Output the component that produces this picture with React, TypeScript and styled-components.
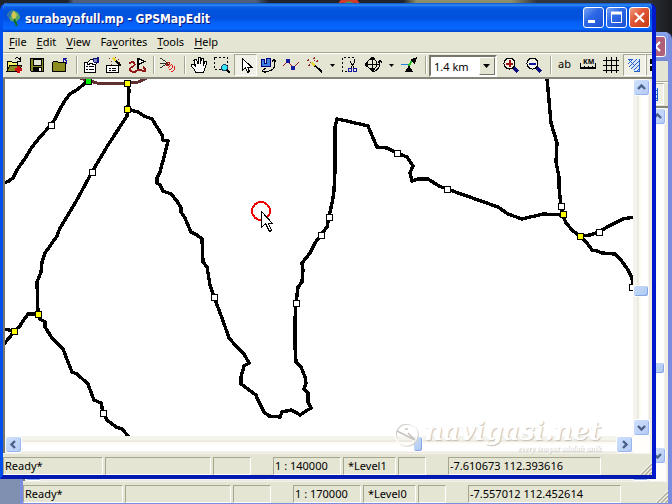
import React from "react";
import styled, { createGlobalStyle, css } from "styled-components";

const GlobalStyle = createGlobalStyle`
  * { box-sizing: border-box; }
  html, body { margin: 0; height: 100%; }
  body, button, select {
    font-family: "Noto Sans", "DejaVu Sans", sans-serif;
    font-size: 11px;
    line-height: 14px;
    color: #000;
  }
`;

const FACE = "#e5e5d3";
const SHADOW = "#a5a590";

const Desktop = styled.div`
  position: relative;
  height: 100vh;
  overflow: hidden;
  background:
    radial-gradient(circle at 349px 8px, #fff 0 3px, #4a9a50 4px 6px, #d23a2c 7px 11px, transparent 12px),
    linear-gradient(90deg, #20242c 0 10%, #50607c 11% 38%, #20242c 40% 60%, #8f8e6c 62% 76%, #30343c 80% 96%, #181a1c) 0 0 / 100% 60px no-repeat,
    #8090b0;
`;

const Frame = styled.section<{ $active: boolean }>`
  position: absolute;
  display: flex;
  flex-direction: column;
  overflow: hidden;
  background: ${FACE};
  border-style: solid;
  border-width: 0 4px 4px 3px;
  border-radius: 7px 7px 0 0;
  ${(p) =>
    p.$active
      ? css`
          inset: 3px 16px 25px 0;
          border-color: #0831d9 #0019cf #0019b0 #0050ee;
        `
      : css`
          inset: 32px 0 -3px 20px;
          border-color: #7a8ce0;
        `}
`;

const TitleBar = styled.header<{ $active: boolean }>`
  display: flex;
  align-items: center;
  flex: none;
  height: 29px;
  margin: 0 -4px 0 -3px;
  padding: 0 6px 0 5px;
  background: ${(p) =>
    p.$active
      ? "linear-gradient(#0a50c8, #2e8cf4 2px, #0a5ee8 4px, #0353dd 7px, #0250dc 15px, #0560f8 20px, #0668ff 26px, #0347d4 28px)"
      : "linear-gradient(#8aa4ec, #7e97e4 6px, #7f93de 24px, #7388d4)"};
`;

const Title = styled.h1`
  flex: 1;
  margin: 2px 0 0 4px;
  font: bold 12px/18px "DejaVu Sans Condensed", "DejaVu Sans", sans-serif;
  color: #fff;
  text-shadow: 1px 1px 0 #0a1c80;
  white-space: nowrap;
`;

const Caption = styled.div`
  display: flex;
  gap: 2px;
  margin-left: auto;
`;

const CaptionButton = styled.button<{ $close?: boolean; $dim?: boolean }>`
  width: 21px;
  height: 21px;
  padding: 0;
  border: 1px solid #fff;
  border-radius: 3px;
  background: ${(p) =>
    p.$dim
      ? "#b06078"
      : p.$close
        ? "linear-gradient(135deg, #f0a080, #e0583a 40%, #c83a14)"
        : "linear-gradient(135deg, #7aa4f4, #2f6ae6 40%, #1a50d4)"};
  svg { display: block; }
`;

const MenuBar = styled.nav`
  display: flex;
  flex: none;
  height: 20px;
  padding-left: 1px;
`;

const MenuItem = styled.button`
  padding: 0 5px;
  border: 0;
  background: none;
  line-height: 18px;
  u { text-underline-offset: 2px; }
`;

const ToolBar = styled.div`
  display: flex;
  flex: none;
  height: 27px;
  overflow: hidden;
  border-top: 1px solid ${SHADOW};
  border-bottom: 2px solid #85857a;
  padding-top: 1px;
  box-shadow: inset 0 1px 0 #fff;
`;

const Tool = styled.button<{ $on?: boolean; $end?: boolean }>`
  flex: none;
  width: 23px;
  height: 22px;
  padding: 0 2px;
  border: 1px solid transparent;
  background: none;
  margin: ${(p) => (p.$end ? "0 4px 0 auto" : 0)};
  ${(p) =>
    p.$on &&
    css`
      border-color: ${SHADOW} #fff #fff ${SHADOW};
      background: #f0f0e6;
    `}
  svg { display: block; shape-rendering: crispEdges; }
`;

const DropTool = styled.button`
  flex: none;
  width: 13px;
  height: 22px;
  padding: 0 4px;
  border: 0;
  background: none;
  svg { display: block; }
`;

const Divider = styled.span`
  flex: none;
  width: 8px;
  height: 18px;
  margin-top: 2px;
  background: linear-gradient(90deg, transparent 4px, ${SHADOW} 4px 5px, #fff 5px 6px, transparent 6px);
`;

const ScaleBox = styled.label`
  display: grid;
  grid-template-columns: 1fr 16px;
  flex: none;
  width: 68px;
  height: 22px;
  margin: 1px 3px 0 0;
  border: 2px solid;
  border-color: #77776c #fff #fff #77776c;
  background: #fff;
`;

const ScaleSelect = styled.select`
  grid-area: 1 / 1 / 2 / 3;
  appearance: none;
  min-width: 0;
  padding: 0 3px;
  border: 0;
  background: #fff;
  line-height: 17px;
`;

const ScaleArrow = styled.span`
  grid-area: 1 / 2 / 2 / 3;
  z-index: 1;
  pointer-events: none;
  border: 1px solid;
  border-color: #fff #77776c #77776c #fff;
  background: ${FACE};
  svg { display: block; }
`;

const Workspace = styled.main`
  display: grid;
  grid-template: minmax(0, 1fr) 17px / minmax(0, 1fr) 17px;
  flex: 1;
  min-height: 0;
  background: #fff;
  border-left: 2px solid #77776c;
  border-right: 2px solid #f0eee2;
`;

const MapCanvas = styled.svg`
  display: block;
  width: 100%;
  height: 100%;
  overflow: hidden;
`;

const Scroll = styled.div<{ $vertical?: boolean }>`
  display: flex;
  flex-direction: ${(p) => (p.$vertical ? "column" : "row")};
  min-width: 0;
  min-height: 0;
  background: linear-gradient(
    ${(p) => (p.$vertical ? "90deg" : "180deg")},
    #f4f4ec 4px, #ecebe3 4px 6px, #fffbf2 6px 8px, #fff 8px 15px, #ece8e0 16px
  );
`;

const ScrollButton = styled.button`
  flex: none;
  width: 17px;
  height: 17px;
  padding: 0;
  border: 1px solid #fff;
  border-radius: 3px;
  background: linear-gradient(135deg, #cfe0fc, #b4cbf4);
  box-shadow: inset -1px -1px 0 #98b4ec;
  svg { display: block; }
`;

const Thumb = styled.div<{ $vertical?: boolean }>`
  flex: none;
  width: ${(p) => (p.$vertical ? "16px" : "10px")};
  height: ${(p) => (p.$vertical ? "12px" : "16px")};
  border: 1px solid #fff;
  border-radius: 3px;
  background: linear-gradient(135deg, #c6dbf8, #adc8f2);
  box-shadow: inset -1px -1px 0 #84a4e4;
`;

const Space = styled.span<{ $grow: number }>`
  flex: ${(p) => p.$grow} 1 0;
`;

const Corner = styled.div`
  background: #fffefa;
`;

const StatusBar = styled.footer`
  display: flex;
  align-items: flex-start;
  flex: none;
  height: 22px;
  padding-top: 3px;
  border-top: 1px solid #f4f0ec;
`;

const Panel = styled.span<{ $w: number; $gap?: number; $pad?: number }>`
  flex: none;
  width: ${(p) => p.$w}px;
  height: 18px;
  margin-right: ${(p) => p.$gap ?? 2}px;
  padding-left: ${(p) => p.$pad ?? 1}px;
  border: 1px solid;
  border-color: ${SHADOW} #fff #fff ${SHADOW};
  line-height: 16px;
  white-space: nowrap;
`;

const Grip = styled.svg`
  display: block;
  flex: none;
  align-self: flex-end;
  margin-left: auto;
`;

const Watermark = styled.aside`
  position: absolute;
  right: 71px;
  bottom: 50px;
  display: grid;
  grid-template: 25px 10px / 30px auto;
  color: #fff;
  text-shadow: 1px 1px 1px #c4c0ba;
  white-space: nowrap;
  pointer-events: none;
  svg { grid-row: 1 / 3; }
`;

const WatermarkName = styled.span`
  font: italic bold 26px/24px "DejaVu Serif", serif;
`;

const WatermarkLine = styled.span`
  justify-self: end;
  font: italic bold 8px/10px "Liberation Serif", serif;
`;

type Dir = "up" | "down" | "left" | "right";
const chevrons: Record<Dir, string> = {
  up: "M4 9 L7.5 5.5 L11 9",
  down: "M4 6 L7.5 9.5 L11 6",
  left: "M9 4 L5.5 7.5 L9 11",
  right: "M6 4 L9.5 7.5 L6 11",
};

const Arrow = ({ dir }: { dir: Dir }) => (
  <ScrollButton aria-label={`Scroll ${dir}`}>
    <svg width="15" height="15">
      <path d={chevrons[dir]} fill="none" stroke="#4a6088" strokeWidth="2.4" />
    </svg>
  </ScrollButton>
);

const Triangle = () => (
  <svg width="5" height="22"><path d="M0 10h5L2.5 13z" /></svg>
);

const icons: Record<string, React.ReactNode> = {
  open: (
    <>
      <path d="M1 14V4h4l1 1h5v3" fill="#f4f060" stroke="#000" />
      <path d="M1 14l3-6h12l-3 6z" fill="#8c8c20" stroke="#000" />
      <path d="M9 2q3-3 5 1M14 0v4h-3" fill="none" stroke="#000" />
      <path d="M12 9v7M9 12.500h7" stroke="#d01010" strokeWidth="3" />
    </>
  ),
  save: (
    <>
      <path d="M1.500 1.500h13v13h-12l-1-1z" fill="#8c8c20" stroke="#000" />
      <path d="M4 2h8v6H4z" fill="#e5e5d3" stroke="#000" />
      <path d="M4 10h9v4H4z" />
      <path d="M10 11h2v3h-2z" fill="#fff" />
    </>
  ),
  folder: (
    <>
      <path d="M.5 14.500v-9l1-1h4l1 1h7v9z" fill="#8c8c20" stroke="#000" />
      <path d="M11 1.500h4M11.500 1v4M12 2q3 1 3 5" fill="none" stroke="#1818a0" />
    </>
  ),
  props: (
    <>
      <path d="M1.500 5.500h11v10h-11z" fill="#fff" stroke="#000" />
      <path d="M3 9.500h2M6 9.500h5M3 12.500h2M6 12.500h5" stroke="#000" />
      <path d="M4 6l4-4 5 1v4l-2 1-3-2-3 2z" fill="#fff" stroke="#000" />
      <path d="M10 1h4v4h-3z" fill="#8088c0" stroke="#101880" />
      <path d="M14 0h2v6h-2z" fill="#101880" />
    </>
  ),
  wizard: (
    <>
      <path d="M.5 8.500h12v7H.5z" fill="#fff" stroke="#000" />
      <path d="M3 11.500h2M6 11.500h4M3 13.500h2M6 13.500h4" stroke="#000" />
      <path d="M8 2l7 7" stroke="#000" strokeWidth="2" />
      <path d="M7 1l3 3" stroke="#e8d820" strokeWidth="2" />
      <path d="M5 4h1M9 0h1M12 2h1M3 1h1M5 7h1M13 5h1" stroke="#902020" />
    </>
  ),
  route: (
    <>
      <path d="M0 7q3-3 5-1t-2 4-1 4 5 0 8 0-1-4" fill="none" stroke="#901818" strokeWidth="2" />
      <path d="M8.500 12V1" stroke="#000" strokeWidth="2" />
      <path d="M9.500 1.500l6 3-6 3z" fill="#fff" stroke="#000" />
    </>
  ),
  signal: (
    <>
      <path d="M0 1l5 3 3 3M0 6h8M0 11l5-3 4-1" fill="none" stroke="#303030" />
      <circle cx="8" cy="7" r="1.500" fill="none" stroke="#d01010" />
      <path d="M8 11l4-4M9 13q4-1 4-5M11 15q4-1 4-6" fill="none" stroke="#e02020" />
    </>
  ),
  hand: (
    <path
      d="M5 15.500Q4 13 1 10L.5 8l2-.5 2 2-1.500-6L4 2l1.500 1L7 7V1l1-.5L9.500 1v6l1-5 1.500-.5 1 1-.5 6 1.500-4 1.500 0v2l-2 6-1 3z"
      fill="#fff"
      stroke="#000"
    />
  ),
  marquee: (
    <>
      <path d="M.5.5h13v12H.5z" fill="none" stroke="#000" strokeDasharray="2 2" />
      <circle cx="10.500" cy="10.500" r="3" fill="#30e8f0" stroke="#204070" />
      <path d="M13 13l3 3" stroke="#000" strokeWidth="2" />
    </>
  ),
  arrow: (
    <path d="M5.500 1.500v12l3-3 2 5 2-1-2-4.500h4z" fill="#fff" stroke="#000" />
  ),
  rotate: (
    <>
      <path d="M1.500 2.500h3v4h2v-5h4v8h-9z" fill="#4080e0" stroke="#000080" />
      <path d="M14 3q3 9-5 11H3M12 5l2-3 2 3M6 11l-4 3 4 2" fill="none" stroke="#000" />
    </>
  ),
  nodes: (
    <>
      <path d="M0 9l5-5 5 7 6-6" fill="none" stroke="#a01818" />
      <path d="M3 2h4v4H3zM8 9h4v4H8z" fill="#1818a0" />
    </>
  ),
  wand: (
    <>
      <path d="M6 6l10 9" stroke="#000" strokeWidth="2" />
      <path d="M6 6l3 3" stroke="#e8d820" strokeWidth="2" />
      <path d="M1 3h2M2 2v2M7 1h2M8 0v2M10 4h2M11 3v2M4 5h1M2 8h2M3 7v2M8 3h1" stroke="#902020" />
    </>
  ),
  cut: (
    <>
      <path d="M5 14.500H.5V.5h12v3" fill="none" stroke="#000" strokeDasharray="2 2" />
      <path d="M8 4l4 7M13 4l-4 7" stroke="#000" fill="none" />
      <circle cx="8" cy="13" r="2" fill="none" stroke="#1818a0" />
      <circle cx="13" cy="13" r="2" fill="none" stroke="#1818a0" />
    </>
  ),
  turn: (
    <>
      <circle cx="7" cy="7" r="5" fill="none" stroke="#000" />
      <path d="M7.500 0v14M0 7.500h14M5.500 2l2-2 2 2M5.500 12l2 2 2-2M2 5.500l-2 2 2 2" fill="none" stroke="#000" />
      <path d="M15 5q0 8-7 10M13 6l2-3 2 3" fill="none" stroke="#000" />
    </>
  ),
  direction: (
    <>
      <path d="M0 7.500h8" stroke="#2080e0" />
      <path d="M8 14q-2-7 6-12" fill="none" stroke="#20c020" strokeWidth="2" />
      <path d="M4 15l4-7 4 7zM9 3l7-3-2 7z" />
    </>
  ),
  zoomIn: (
    <>
      <circle cx="6.500" cy="6.500" r="5.500" fill="#f4f4e8" stroke="#000" />
      <path d="M3 6.500h7M6.500 3v7" stroke="#a01010" strokeWidth="2" />
      <path d="M11 11l4 4" stroke="#101080" strokeWidth="3" />
    </>
  ),
  zoomOut: (
    <>
      <circle cx="6.500" cy="6.500" r="5.500" fill="#f4f4e8" stroke="#000" />
      <path d="M3 6.500h7" stroke="#1010a0" strokeWidth="2" />
      <path d="M11 11l4 4" stroke="#101080" strokeWidth="3" />
    </>
  ),
  label: (
    <text x="1" y="11" fontSize="11" fill="#000">ab</text>
  ),
  km: (
    <>
      <text x="3" y="7" fontSize="7" fontWeight="bold" fill="#000">KM</text>
      <path d="M.5 6v5M15.500 6v5M4.500 9v2M8.500 9v2M12.500 9v2" fill="none" stroke="#000" />
      <path d="M0 11h16" stroke="#000" strokeWidth="2" />
    </>
  ),
  grid: <path d="M3.500 0v16M8.500 0v16M13.500 0v16M0 3.500h16M0 8.500h16M0 13.500h16" stroke="#000" />,
  hatch: (
    <>
      <path d="M2 2h12v13H8L2 9l3-3z" fill="#dce8f8" />
      <path d="M2 2h5M13.500 2v13M8 14.500h6" stroke="#2060c8" />
      <path d="M2 7l5-5M3 10l8-8M5 12l9-9M8 13l6-6M10 15l4-4M2 2l6 6" stroke="#2060c8" />
    </>
  ),
  squares: <path d="M1 2h5v5H1zM1 9h5v5H1zM9 2h5v5H9z" />,
};

type IconToolProps = { icon: string; label: string; on?: boolean; drop?: boolean; end?: boolean };
const groups: IconToolProps[][] = [
  [
    { icon: "open", label: "Open" },
    { icon: "save", label: "Save" },
    { icon: "folder", label: "Close" },
  ],
  [
    { icon: "props", label: "Map properties" },
    { icon: "wizard", label: "Wizard" },
    { icon: "route", label: "Waypoints" },
  ],
  [{ icon: "signal", label: "GPS" }],
  [
    { icon: "hand", label: "Drag map" },
    { icon: "marquee", label: "Zoom to area" },
    { icon: "arrow", label: "Select objects", on: true },
    { icon: "rotate", label: "Modify" },
    { icon: "nodes", label: "Edit nodes" },
    { icon: "wand", label: "Create object", drop: true },
    { icon: "cut", label: "Trim" },
    { icon: "turn", label: "Transform", drop: true },
    { icon: "direction", label: "Connect nodes" },
  ],
];

const IconTool = ({ icon, label, on, drop, end }: IconToolProps) => (
  <>
    <Tool aria-label={label} $on={on} $end={end}>
      <svg width="17" height="17" viewBox="0 0 17 17">{icons[icon]}</svg>
    </Tool>
    {drop && <DropTool aria-label={`${label} options`}><Triangle /></DropTool>}
  </>
);

const roads = [
  "88,81 84,84 78,89 70,94 66,99 60,109 55,119 51,125 40,137 32,147 26,157 17,170 13,178 9,181 4,183",
  "127,83 129,90 128,109 127,116 108,145 92,172 78,198 65,220 60,228 57,236 45,253 42,262 41,272 37,282 38,314",
  "127,109 138,112 144,116 152,119 157,127 162,135 163,140 168,141 165,153 160,172 157,178 157,183 160,185 163,191 171,194 177,201 181,208 181,212 185,218 191,232 197,235 202,239 203,262 207,267 210,285 214,297 222,318 229,338 237,347 244,354 249,363 244,366 241,377 241,384 256,395 257,398 264,412 269,416 280,417 282,412 291,410 297,413 300,415 306,411 311,408 308,402 308,393 304,389 306,383 305,377 301,367 296,362 295,347 295,320 296,303 298,287 302,282 303,270 302,263 310,253 315,243 321,235 327,227 329,217 333,198 334,190 335,170 335,127 337,119 347,121 368,126 377,147 387,148 397,153 407,157 413,166 410,173 412,181 418,179 428,179 439,186 447,189 498,207 508,214 522,219 543,214 563,215",
  "547,78 551,123 557,143 556,162 559,177 559,187 561,206 563,215 566,223 573,231 580,236 587,243 592,250 597,251 602,253 615,254 621,260 628,270 632,278 633,287",
  "580,236 590,235 599,232 607,227 623,219 634,217",
  "38,314 28,314 23,321 20,326 14,331 4,329",
  "14,331 10,337 4,344",
  "38,314 40,319 45,322 45,327 52,338 63,349 68,362 72,372 77,374 88,384 94,400 101,403 103,412 107,420 116,427 122,429 129,437",
];

const nodes: [number, number, string][] = [
  [88, 81, "#00f000"],
  [127, 83, "#ffff00"], [127, 109, "#ffff00"], [38, 314, "#ffff00"], [14, 331, "#ffff00"],
  [563, 214, "#ffff00"], [580, 236, "#ffff00"],
  [51, 125, "#fff"], [92, 172, "#fff"], [214, 297, "#fff"], [296, 303, "#fff"],
  [321, 235, "#fff"], [329, 217, "#fff"], [397, 153, "#fff"], [447, 189, "#fff"],
  [561, 206, "#fff"], [599, 232, "#fff"], [632, 287, "#fff"], [103, 413, "#fff"],
];

const RoadMap = () => (
  <MapCanvas role="img" aria-label="Road map">
    <g transform="translate(-5 -79)" shapeRendering="crispEdges" fill="none">
      <polyline points="80,78 90,81 97,83 110,84 127,83 138,82 147,78" stroke="#603030" strokeWidth="3" />
      {roads.map((points) => (
        <polyline key={points} points={points} stroke="#000" strokeWidth="3.400" strokeLinejoin="round" />
      ))}
      {nodes.map(([x, y, fill]) => (
        <rect key={`${x}-${y}`} x={x - 2.5} y={y - 2.5} width="6" height="6" fill={fill} stroke="#000" />
      ))}
      <circle cx="261" cy="211" r="9" stroke="#f00000" strokeWidth="2" />
      <path d="M261.500 211.500v16l4-4 4 8 2-1-3-7h4z" fill="#fff" stroke="#000" />
    </g>
  </MapCanvas>
);

const menus: [string, string, string][] = [
  ["", "F", "ile"], ["", "E", "dit"], ["", "V", "iew"],
  ["Fa", "v", "orites"], ["", "T", "ools"], ["", "H", "elp"],
];

type WindowProps = {
  active: boolean;
  scale: string;
  level: string;
  position: string;
  splitY: [number, number];
  splitX: [number, number];
};

const EditorWindow = ({ active, scale, level, position, splitY, splitX }: WindowProps) => (
  <Frame $active={active}>
    <TitleBar $active={active}>
      {active && (
        <>
          <svg width="16" height="18" viewBox="0 0 16 18">
            <path d="M2 6q3-6 8-4t5 7l-4 4-5-1z" fill="#58a868" />
            <path d="M5 4l4-2 3 4-3 6z" fill="#d0c850" />
            <path d="M2 7q2-5 6-5l-3 7z" fill="#3070b0" />
            <path d="M9 10l3 7" stroke="#107020" strokeWidth="2" />
          </svg>
          <Title>surabayafull.mp - GPSMapEdit</Title>
        </>
      )}
      <Caption>
        {active && (
          <>
            <CaptionButton aria-label="Minimize">
              <svg width="19" height="19"><path d="M4 13.500h7" stroke="#fff" strokeWidth="3" /></svg>
            </CaptionButton>
            <CaptionButton aria-label="Maximize">
              <svg width="19" height="19">
                <path d="M4.500 5.500h10v9h-10zM4 5.500h11" fill="none" stroke="#fff" />
                <path d="M4 5h11" stroke="#fff" strokeWidth="3" />
              </svg>
            </CaptionButton>
          </>
        )}
        <CaptionButton aria-label="Close" $close $dim={!active}>
          <svg width="19" height="19"><path d="M5 5l9 9M14 5l-9 9" stroke="#fff" strokeWidth="2.200" /></svg>
        </CaptionButton>
      </Caption>
    </TitleBar>
    <MenuBar>
      {active &&
        menus.map(([a, b, c]) => (
          <MenuItem key={b}>{a}<u>{b}</u>{c}</MenuItem>
        ))}
    </MenuBar>
    <ToolBar>
      {active ? (
        <>
          {groups.map((group, i) => (
            <React.Fragment key={i}>
              {group.map((t) => <IconTool key={t.icon} {...t} />)}
              <Divider />
            </React.Fragment>
          ))}
          <ScaleBox>
            <ScaleSelect aria-label="Scale" defaultValue="1.4 km">
              <option>1.4 km</option>
            </ScaleSelect>
            <ScaleArrow>
              <svg width="14" height="15"><path d="M3 6h7l-3.500 4z" /></svg>
            </ScaleArrow>
          </ScaleBox>
          <IconTool icon="zoomIn" label="Zoom in" />
          <IconTool icon="zoomOut" label="Zoom out" />
          <Divider />
          <IconTool icon="label" label="Show labels" />
          <IconTool icon="km" label="Show ruler" />
          <IconTool icon="grid" label="Show grid" />
          <IconTool icon="hatch" label="Show polygons" on />
          <IconTool icon="squares" label="Show points" on />
        </>
      ) : (
        <IconTool icon="hatch" label="Show polygons" on end />
      )}
    </ToolBar>
    <Workspace>
      {active ? <RoadMap /> : <div />}
      <Scroll $vertical>
        <Arrow dir="up" />
        <Space $grow={splitY[0]} />
        <Thumb $vertical />
        <Space $grow={splitY[1]} />
        <Arrow dir="down" />
      </Scroll>
      <Scroll>
        <Arrow dir="left" />
        <Space $grow={splitX[0]} />
        <Thumb />
        <Space $grow={splitX[1]} />
        <Arrow dir="right" />
      </Scroll>
      <Corner />
    </Workspace>
    <StatusBar>
      <Panel $w={100}>Ready*</Panel>
      <Panel $w={106} />
      <Panel $w={38} $gap={22} />
      <Panel $w={68}>{scale}</Panel>
      <Panel $w={53} $pad={4}>{level}</Panel>
      <Panel $w={28} $gap={22} />
      <Panel $w={153}>{position}</Panel>
      <Grip width="13" height="13">
        <path d="M1 13L13 1M5 13l8-8M9 13l4-4" stroke="#fff" strokeWidth="1.500" />
        <path d="M2 13L13 2M6 13l7-7M10 13l3-3" stroke="#b0ae98" strokeWidth="1.500" />
      </Grip>
    </StatusBar>
  </Frame>
);

export default function App() {
  return (
    <>
      <GlobalStyle />
      <Desktop>
        <EditorWindow
          active={false}
          scale="1 : 170000"
          level="*Level0"
          position="-7.557012 112.452614"
          splitY={[239, 73]}
          splitX={[220, 354]}
        />
        <EditorWindow
          active
          scale="1 : 140000"
          level="*Level1"
          position="-7.610673 112.393616"
          splitY={[189, 122]}
          splitX={[392, 193]}
        />
        <Watermark>
          <svg width="26" height="32">
            <circle cx="13" cy="16" r="11" fill="none" stroke="#d4d0cc" strokeWidth="1.500" />
            <circle cx="12" cy="15" r="11" fill="none" stroke="#fff" strokeWidth="1.500" />
            <path d="M3 12l18 9-7-7M11 10h3" fill="none" stroke="#c8c2be" strokeWidth="1.500" />
          </svg>
          <WatermarkName>navigasi.net</WatermarkName>
          <WatermarkLine>every tempat adalah unik</WatermarkLine>
        </Watermark>
      </Desktop>
    </>
  );
}
